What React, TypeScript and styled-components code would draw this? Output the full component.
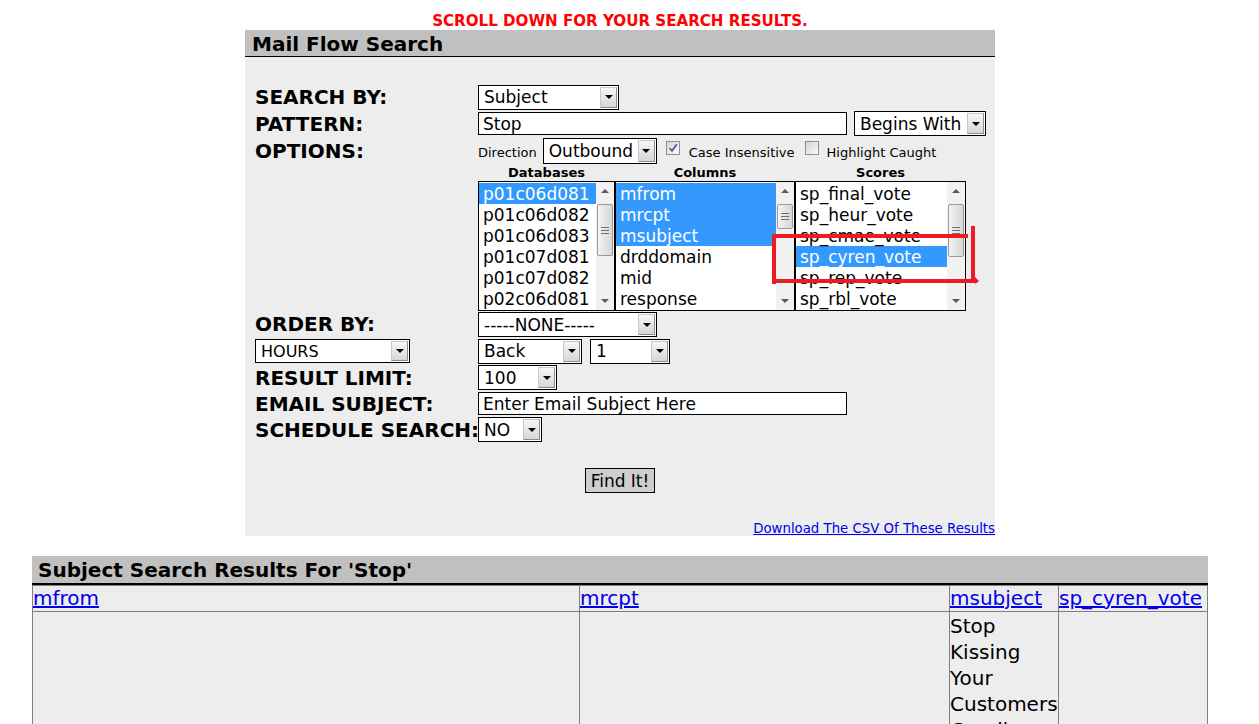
import React from "react";
import styled, { createGlobalStyle } from "styled-components";

const GlobalStyle = createGlobalStyle`
  html, body { margin: 0; padding: 0; background: #fff; overflow: hidden; }
  body { font-family: "DejaVu Sans", Verdana, sans-serif; color: #000; }
`;

const Page = styled.div`
  position: relative;
  width: 1240px;
  height: 724px;
  overflow: hidden;
  padding-top: 12px;
  box-sizing: border-box;
  display: flex;
  flex-direction: column;
  align-items: center;
`;

const Notice = styled.div`
  height: 18px;
  line-height: 18px;
  font-size: 15.1px;
  font-weight: bold;
  color: #ff0000;
`;

const Panel = styled.div`
  width: 750px;
  background: #ededed;
  display: flex;
  flex-direction: column;
`;

const PanelHeader = styled.div`
  height: 26px;
  line-height: 28px;
  background: #c0c0c0;
  border-bottom: 1px solid #000;
  padding-left: 7px;
  font-size: 20px;
  font-weight: bold;
`;

const FormBody = styled.div`
  padding: 27px 0 0 10px;
  display: flex;
  flex-direction: column;
`;

const FormRow = styled.div<{ $h: number; $align?: string }>`
  display: grid;
  grid-template-columns: 223px 1fr;
  height: ${(p) => p.$h}px;
  align-items: ${(p) => p.$align ?? "center"};
`;

const Label = styled.div`
  font-size: 20px;
  font-weight: bold;
  white-space: nowrap;
  line-height: 24px;
`;

const Controls = styled.div<{ $gap?: number }>`
  display: flex;
  align-items: center;
  gap: ${(p) => p.$gap ?? 7}px;
`;

const SelectBox = styled.div<{ $w: number; $h?: number; $fs?: number }>`
  display: inline-flex;
  align-items: stretch;
  box-sizing: border-box;
  width: ${(p) => p.$w}px;
  height: ${(p) => p.$h ?? 25}px;
  border: 1px solid #000;
  background: #fff;
  font-size: ${(p) => p.$fs ?? 17}px;
  flex-shrink: 0;
`;

const SelectText = styled.span`
  flex: 1;
  padding-left: 5px;
  display: flex;
  align-items: center;
  white-space: nowrap;
  overflow: hidden;
`;

const SelectButton = styled.span`
  width: 17px;
  margin: 1px;
  box-sizing: border-box;
  border: 1px solid #8c8c8c;
  border-top-color: #c8c8c8;
  border-left-color: #c8c8c8;
  background: linear-gradient(#f6f6f6, #d6d6d6);
  display: flex;
  align-items: center;
  justify-content: center;
`;

const Triangle = styled.span<{ $up?: boolean; $color?: string }>`
  width: 0;
  height: 0;
  border-left: 4px solid transparent;
  border-right: 4px solid transparent;
  ${(p) =>
    p.$up
      ? `border-bottom: 4px solid ${p.$color ?? "#000"};`
      : `border-top: 4px solid ${p.$color ?? "#000"};`}
`;

const TextInput = styled.div<{ $w: number }>`
  box-sizing: border-box;
  width: ${(p) => p.$w}px;
  height: 23px;
  border: 1px solid #000;
  background: #fff;
  font-size: 17px;
  line-height: 22px;
  padding-left: 4px;
  white-space: nowrap;
  overflow: hidden;
  flex-shrink: 0;
`;

const SmallText = styled.span<{ $ml?: number }>`
  font-size: 13px;
  white-space: nowrap;
  margin-left: ${(p) => p.$ml ?? 0}px;
  padding-top: 2px;
`;

const CheckBox = styled.span<{ $ml?: number }>`
  width: 14px;
  height: 14px;
  box-sizing: border-box;
  border: 1px solid #8e8f8f;
  background: linear-gradient(135deg, #d4d4d4, #fbfbfb);
  display: inline-flex;
  align-items: center;
  justify-content: center;
  margin-left: ${(p) => p.$ml ?? 0}px;
  margin-top: -6px;
  flex-shrink: 0;
`;

const ListGroup = styled.div`
  display: flex;
  align-items: flex-start;
`;

const ListColumn = styled.div<{ $w: number }>`
  width: ${(p) => p.$w}px;
  display: flex;
  flex-direction: column;
`;

const ListHeading = styled.div`
  height: 16px;
  line-height: 16px;
  font-size: 13px;
  font-weight: bold;
  text-align: center;
`;

const ListBox = styled.div`
  height: 130px;
  box-sizing: border-box;
  border: 1px solid #000;
  background: #fff;
  display: flex;
`;

const ListItems = styled.div`
  flex: 1;
  padding-top: 1px;
  overflow: hidden;
`;

const ListItem = styled.div<{ $sel?: boolean }>`
  height: 21px;
  line-height: 22px;
  font-size: 17px;
  padding-left: 4px;
  white-space: nowrap;
  background: ${(p) => (p.$sel ? "#3399ff" : "transparent")};
  color: ${(p) => (p.$sel ? "#fff" : "#000")};
`;

const Scrollbar = styled.div`
  width: 18px;
  background: #f1f1f1;
  display: flex;
  flex-direction: column;
`;

const ArrowCell = styled.div`
  height: 18px;
  display: flex;
  align-items: center;
  justify-content: center;
`;

const TrackGap = styled.div<{ $h: number }>`
  height: ${(p) => p.$h}px;
`;

const TrackFill = styled.div`
  flex: 1;
`;

const Thumb = styled.div<{ $h: number }>`
  height: ${(p) => p.$h}px;
  margin: 0 1px;
  box-sizing: border-box;
  border: 1px solid #9b9b9b;
  border-radius: 2px;
  background: linear-gradient(90deg, #f3f3f3, #e2e2e2 60%, #d6d6d6);
  display: flex;
  flex-direction: column;
  align-items: center;
  justify-content: center;
  gap: 2px;
`;

const Grip = styled.span`
  width: 8px;
  height: 1px;
  background: #6f6f6f;
`;

const ButtonRow = styled.div`
  display: flex;
  justify-content: center;
  margin-top: 25px;
`;

const FindButton = styled.button`
  height: 25px;
  box-sizing: border-box;
  border: 1px solid #000;
  background: #cecece;
  font-family: inherit;
  font-size: 17px;
  padding: 0 5px;
  color: #000;
`;

const LinkRow = styled.div`
  display: flex;
  justify-content: flex-end;
  margin-top: 27px;
  height: 16px;
  line-height: 17px;
`;

const Link = styled.a<{ $fs?: number }>`
  color: #0000ee;
  text-decoration: underline;
  font-size: ${(p) => p.$fs ?? 13.3}px;
  white-space: nowrap;
`;

const Results = styled.div`
  width: 1176px;
  margin-top: 20px;
`;

const ResultsHeader = styled.div`
  height: 27px;
  line-height: 28px;
  background: #c0c0c0;
  border-bottom: 2px solid #000;
  padding-left: 6px;
  font-size: 20px;
  font-weight: bold;
`;

const Table = styled.table`
  width: 1176px;
  border-collapse: collapse;
  table-layout: fixed;
  background: #ededed;
`;

const Cell = styled.td<{ $w?: number }>`
  ${(p) => (p.$w ? `width: ${p.$w}px;` : "")}
  border: 1px solid #808080;
  padding: 1px 0 0 0;
  font-size: 20px;
  line-height: 26px;
  vertical-align: top;
  white-space: normal;
`;

const HeadCell = styled(Cell)`
  height: 24px;
  padding: 0;
  line-height: 25px;
  white-space: nowrap;
  overflow: hidden;
`;

const Annotation = styled.svg`
  position: absolute;
  left: 770px;
  top: 224px;
  width: 212px;
  height: 64px;
`;

type SelectProps = { w: number; h?: number; fs?: number; value: string };
const Select = ({ w, h, fs, value }: SelectProps) => (
  <SelectBox $w={w} $h={h} $fs={fs}>
    <SelectText>{value}</SelectText>
    <SelectButton>
      <Triangle />
    </SelectButton>
  </SelectBox>
);

type ListProps = {
  w: number;
  title: string;
  items: string[];
  selected: number[];
  thumbTop: number;
  thumbH: number;
};
const List = ({ w, title, items, selected, thumbTop, thumbH }: ListProps) => (
  <ListColumn $w={w}>
    <ListHeading>{title}</ListHeading>
    <ListBox>
      <ListItems>
        {items.map((it, i) => (
          <ListItem key={it} $sel={selected.includes(i)}>
            {it}
          </ListItem>
        ))}
      </ListItems>
      <Scrollbar>
        <ArrowCell>
          <Triangle $up $color="#5a5a5a" />
        </ArrowCell>
        <TrackGap $h={thumbTop} />
        <Thumb $h={thumbH}>
          <Grip />
          <Grip />
          <Grip />
        </Thumb>
        <TrackFill />
        <ArrowCell>
          <Triangle $color="#5a5a5a" />
        </ArrowCell>
      </Scrollbar>
    </ListBox>
  </ListColumn>
);

export default function App() {
  return (
    <>
      <GlobalStyle />
      <Page>
        <Notice>SCROLL DOWN FOR YOUR SEARCH RESULTS.</Notice>
        <Panel>
          <PanelHeader>Mail Flow Search</PanelHeader>
          <FormBody>
            <FormRow $h={26}>
              <Label>SEARCH BY:</Label>
              <Controls>
                <Select w={141} value="Subject" />
              </Controls>
            </FormRow>
            <FormRow $h={27}>
              <Label>PATTERN:</Label>
              <Controls>
                <TextInput $w={369}>Stop</TextInput>
                <Select w={132} value="Begins With" />
              </Controls>
            </FormRow>
            <FormRow $h={28}>
              <Label>OPTIONS:</Label>
              <Controls $gap={0}>
                <SmallText>Direction</SmallText>
                <SelectBox $w={114} $h={26} style={{ marginLeft: 6 }}>
                  <SelectText>Outbound</SelectText>
                  <SelectButton>
                    <Triangle />
                  </SelectButton>
                </SelectBox>
                <CheckBox $ml={9}>
                  <svg width="10" height="10" viewBox="0 0 10 10">
                    <path d="M1.5 5 L4 7.8 L8.8 1.2" fill="none" stroke="#4a5d94" strokeWidth="1.8" />
                  </svg>
                </CheckBox>
                <SmallText $ml={9}>Case Insensitive</SmallText>
                <CheckBox $ml={10} />
                <SmallText $ml={8}>Highlight Caught</SmallText>
              </Controls>
            </FormRow>
            <FormRow $h={147} $align="start">
              <div />
              <ListGroup>
                <List
                  w={137}
                  title="Databases"
                  items={["p01c06d081", "p01c06d082", "p01c06d083", "p01c07d081", "p01c07d082", "p02c06d081"]}
                  selected={[0]}
                  thumbTop={4}
                  thumbH={52}
                />
                <List
                  w={180}
                  title="Columns"
                  items={["mfrom", "mrcpt", "msubject", "drddomain", "mid", "response"]}
                  selected={[0, 1, 2]}
                  thumbTop={4}
                  thumbH={25}
                />
                <List
                  w={171}
                  title="Scores"
                  items={["sp_final_vote", "sp_heur_vote", "sp_cmae_vote", "sp_cyren_vote", "sp_rep_vote", "sp_rbl_vote"]}
                  selected={[3]}
                  thumbTop={4}
                  thumbH={53}
                />
              </ListGroup>
            </FormRow>
            <FormRow $h={26} $align="start">
              <Label>ORDER BY:</Label>
              <Controls>
                <Select w={179} value="-----NONE-----" />
              </Controls>
            </FormRow>
            <FormRow $h={26}>
              <Select w={155} h={24} fs={16} value="HOURS" />
              <Controls $gap={8}>
                <Select w={104} value="Back" />
                <Select w={80} value="1" />
              </Controls>
            </FormRow>
            <FormRow $h={27}>
              <Label>RESULT LIMIT:</Label>
              <Controls>
                <Select w={79} value="100" />
              </Controls>
            </FormRow>
            <FormRow $h={25}>
              <Label>EMAIL SUBJECT:</Label>
              <Controls>
                <TextInput $w={369}>Enter Email Subject Here</TextInput>
              </Controls>
            </FormRow>
            <FormRow $h={27}>
              <Label>SCHEDULE SEARCH:</Label>
              <Controls>
                <Select w={64} value="NO" />
              </Controls>
            </FormRow>
          </FormBody>
          <ButtonRow>
            <FindButton>Find It!</FindButton>
          </ButtonRow>
          <LinkRow>
            <Link href="#">Download The CSV Of These Results</Link>
          </LinkRow>
        </Panel>
        <Results>
          <ResultsHeader>Subject Search Results For 'Stop'</ResultsHeader>
          <Table>
            <tbody>
              <tr>
                <HeadCell $w={546}>
                  <Link $fs={20} href="#">mfrom</Link>
                </HeadCell>
                <HeadCell $w={369}>
                  <Link $fs={20} href="#">mrcpt</Link>
                </HeadCell>
                <HeadCell $w={108}>
                  <Link $fs={20} href="#">msubject</Link>
                </HeadCell>
                <HeadCell>
                  <Link $fs={20} href="#">sp_cyren_vote</Link>
                </HeadCell>
              </tr>
              <tr>
                <Cell />
                <Cell />
                <Cell>Stop Kissing Your Customers Goodbye</Cell>
                <Cell />
              </tr>
            </tbody>
          </Table>
        </Results>
        <Annotation viewBox="0 0 212 64">
          <g fill="#ed1c24">
            <rect x="2" y="10" width="196" height="4" />
            <rect x="2" y="10" width="4" height="50" />
            <rect x="201" y="2" width="4" height="57" />
            <rect x="2" y="55" width="205" height="4" />
            <polygon points="205,53 209,57 205,60" />
          </g>
        </Annotation>
      </Page>
    </>
  );
}
